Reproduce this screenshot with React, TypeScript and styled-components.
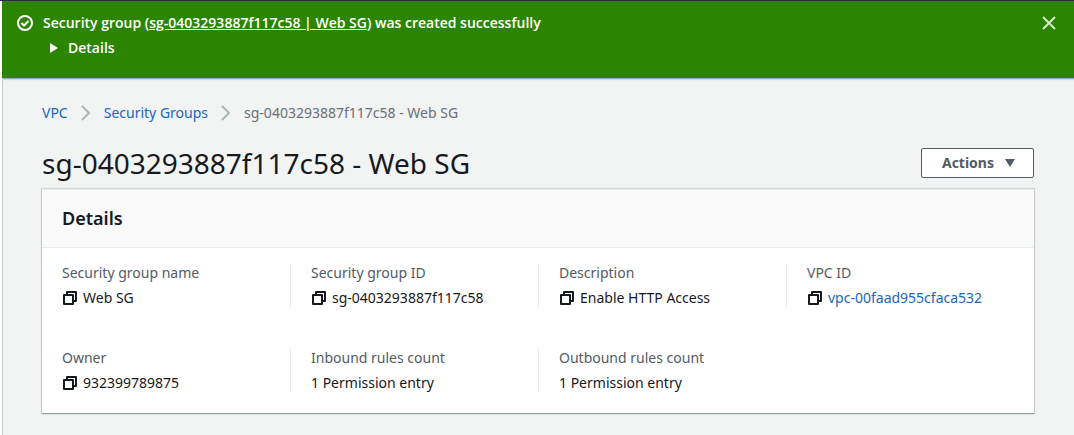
import React from "react";
import styled, { createGlobalStyle } from "styled-components";

const GlobalStyle = createGlobalStyle`
  *, *::before, *::after { box-sizing: border-box; }
  body {
    margin: 0;
    background: #f2f3f3;
    color: #16191f;
    font-family: "Noto Sans", "Open Sans", sans-serif;
    font-size: 14px;
    line-height: 20px;
  }
  button { font: inherit; color: inherit; cursor: pointer; }
`;

const Page = styled.div`
  min-height: 100vh;
  display: flex;
  flex-direction: column;
  border-top: 1px solid #232f3e;
`;

const Body = styled.div`
  flex: 1;
  display: flex;
`;

const NavEdge = styled.div`
  width: 2px;
  flex: none;
  background: #ffffff;
`;

const Main = styled.main`
  flex: 1;
  min-width: 0;
  display: flex;
  flex-direction: column;
`;

const Flash = styled.div`
  display: flex;
  align-items: flex-start;
  gap: 9px;
  min-height: 77px;
  padding: 11px 17px 18px 14px;
  background: #2c8500;
  border-top: 1px solid #44713c;
  box-shadow: 0 1px 0 #9ba7b6, 0 2px 1px #d5dbdb;
  color: #ffffff;
  font-family: "Open Sans", "Noto Sans", sans-serif;
  font-weight: 600;
`;

const FlashIcon = styled.svg`
  flex: none;
  width: 18px;
  height: 18px;
  margin-top: 1px;
`;

const FlashText = styled.div`
  flex: 1;
`;

const FlashMessage = styled.p`
  margin: 0 0 5px;
`;

const FlashLink = styled.a`
  color: inherit;
  text-decoration: underline;
`;

const PlainButton = styled.button`
  display: flex;
  align-items: center;
  padding: 0;
  border: 0;
  background: none;
`;

const Expander = styled(PlainButton)`
  gap: 10px;
  margin-left: 7px;
`;

const CloseButton = styled(PlainButton)`
  margin-top: 2px;
`;

const Content = styled.div`
  flex: 1;
  padding: 25px 40px 21px 39px;
  border-left: 1px solid #c9cfcf;
`;

const Crumbs = styled.nav`
  display: flex;
  align-items: center;
  gap: 13px;
`;

const Crumb = styled.a`
  color: #1a66bb;
  text-decoration: none;
`;

const CurrentCrumb = styled.span`
  color: #687078;
`;

const TitleRow = styled.header`
  display: flex;
  align-items: center;
  justify-content: space-between;
  margin: 22px 0 8px;
`;

const Title = styled.h1`
  margin: 0;
  font-size: 28px;
  line-height: 36px;
  font-weight: 400;
`;

const ActionsButton = styled.button`
  display: flex;
  align-items: center;
  gap: 11px;
  height: 30px;
  padding: 0 18px 0 20px;
  border: 1px solid #545b64;
  border-radius: 2px;
  background: #ffffff;
  color: #545b64;
  font-weight: 700;
`;

const Card = styled.section`
  background: #ffffff;
  border-top: 1px solid #eaeded;
  box-shadow: 0 1px 1px 0 rgba(0, 28, 36, 0.3), 0 0 1px 1px rgba(0, 28, 36, 0.13);
`;

const CardHeader = styled.div`
  padding: 16px 20px 17px;
  background: #fafafa;
  border-bottom: 1px solid #eaeded;
`;

const CardTitle = styled.h2`
  margin: 0;
  font-size: 18px;
  line-height: 24px;
  font-weight: 600;
`;

const Fields = styled.dl`
  display: grid;
  grid-template-columns: repeat(4, 1fr);
  row-gap: 40px;
  margin: 0;
  padding: 15px 0 20px;
`;

const Cell = styled.div<{ $divided: boolean }>`
  padding: 0 20px;
  border-left: ${(p) => (p.$divided ? "1px solid #eaeded" : "0")};
`;

const Label = styled.dt`
  margin-bottom: 5px;
  color: #545b64;
`;

const Value = styled.dd`
  display: flex;
  align-items: center;
  gap: 5px;
  margin: 0;
`;

function CopyButton({ label }: { label: string }) {
  return (
    <PlainButton type="button" aria-label={`Copy ${label}`}>
      <svg width="16" height="16" viewBox="0 0 16 16" fill="none" stroke="#16191f" strokeWidth="2" strokeLinejoin="round">
        <path d="M2 5h9v9H2z" />
        <path d="M5 5V2h9v9h-3" />
      </svg>
    </PlainButton>
  );
}

function Chevron() {
  return (
    <svg width="10" height="16" viewBox="0 0 10 16" fill="none" stroke="#aab7b8" strokeWidth="2" aria-hidden="true">
      <path d="M1 1l7 7-7 7" />
    </svg>
  );
}

type Field = { label: string; value: string; copy?: boolean; href?: string };

const fields: Field[] = [
  { label: "Security group name", value: "Web SG", copy: true },
  { label: "Security group ID", value: "sg-0403293887f117c58", copy: true },
  { label: "Description", value: "Enable HTTP Access", copy: true },
  { label: "VPC ID", value: "vpc-00faad955cfaca532", copy: true, href: "#vpc" },
  { label: "Owner", value: "932399789875", copy: true },
  { label: "Inbound rules count", value: "1 Permission entry" },
  { label: "Outbound rules count", value: "1 Permission entry" },
];

export default function App() {
  return (
    <Page>
      <GlobalStyle />
      <Body>
        <NavEdge />
        <Main>
          <Flash role="status">
            <FlashIcon viewBox="0 0 18 18" fill="none" stroke="#ffffff" strokeWidth="2" aria-hidden="true">
              <circle cx="9" cy="9" r="7" />
              <path d="M5.500 9l2.500 2.500 4.500-4.500" />
            </FlashIcon>
            <FlashText>
              <FlashMessage>
                Security group (<FlashLink href="#group">sg-0403293887f117c58 | Web SG</FlashLink>) was created successfully
              </FlashMessage>
              <Expander type="button" aria-expanded="false">
                <svg width="8" height="10" viewBox="0 0 8 10" fill="#ffffff" aria-hidden="true">
                  <path d="M0 0l8 5-8 5z" />
                </svg>
                Details
              </Expander>
            </FlashText>
            <CloseButton type="button" aria-label="Dismiss">
              <svg width="16" height="16" viewBox="0 0 16 16" fill="none" stroke="#d5e7cc" strokeWidth="2">
                <path d="M2 2l12 12M14 2L2 14" />
              </svg>
            </CloseButton>
          </Flash>
          <Content>
            <Crumbs aria-label="Breadcrumb">
              <Crumb href="#vpc-home">VPC</Crumb>
              <Chevron />
              <Crumb href="#groups">Security Groups</Crumb>
              <Chevron />
              <CurrentCrumb aria-current="page">sg-0403293887f117c58 - Web SG</CurrentCrumb>
            </Crumbs>
            <TitleRow>
              <Title>sg-0403293887f117c58 - Web SG</Title>
              <ActionsButton type="button" aria-haspopup="menu">
                Actions
                <svg width="10" height="8" viewBox="0 0 10 8" fill="#545b64" aria-hidden="true">
                  <path d="M0 0h10L5 8z" />
                </svg>
              </ActionsButton>
            </TitleRow>
            <Card>
              <CardHeader>
                <CardTitle>Details</CardTitle>
              </CardHeader>
              <Fields>
                {fields.map((f, i) => (
                  <Cell key={f.label} $divided={i % 4 !== 0}>
                    <Label>{f.label}</Label>
                    <Value>
                      {f.copy && <CopyButton label={f.label} />}
                      {f.href ? <Crumb href={f.href}>{f.value}</Crumb> : f.value}
                    </Value>
                  </Cell>
                ))}
              </Fields>
            </Card>
          </Content>
        </Main>
      </Body>
    </Page>
  );
}
